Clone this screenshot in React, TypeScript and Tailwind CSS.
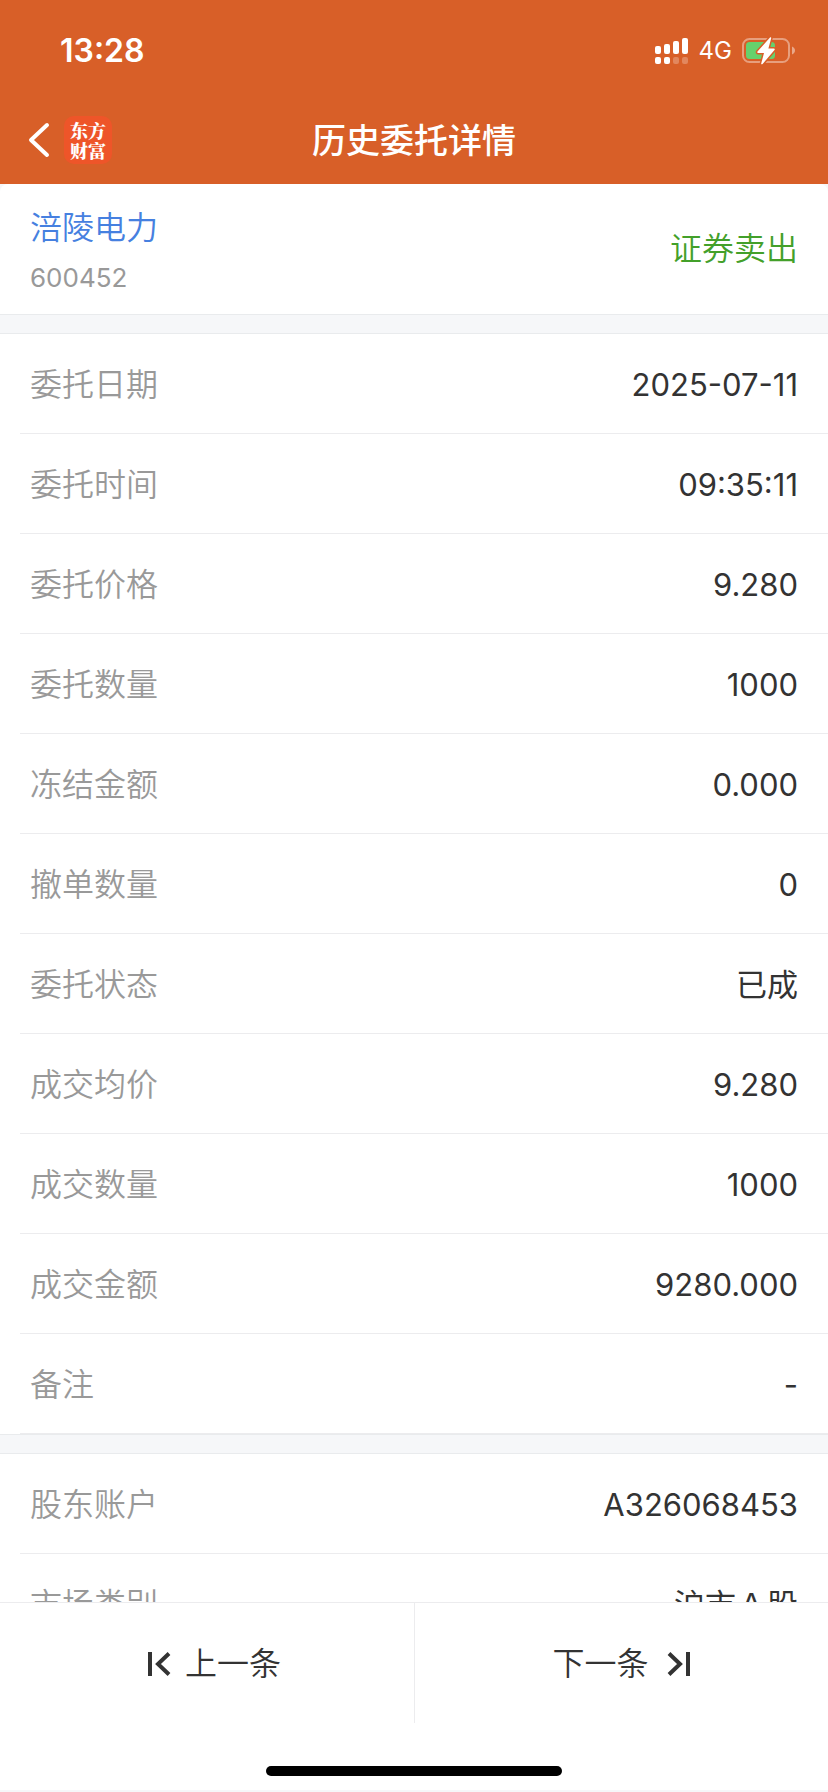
import React from 'react';

interface Field {
  label: string;
  value: string;
}

const orderFields: Field[] = [
  { label: '委托日期', value: '2025-07-11' },
  { label: '委托时间', value: '09:35:11' },
  { label: '委托价格', value: '9.280' },
  { label: '委托数量', value: '1000' },
  { label: '冻结金额', value: '0.000' },
  { label: '撤单数量', value: '0' },
  { label: '委托状态', value: '已成' },
  { label: '成交均价', value: '9.280' },
  { label: '成交数量', value: '1000' },
  { label: '成交金额', value: '9280.000' },
  { label: '备注', value: '-' }
];

const accountFields: Field[] = [
  { label: '股东账户', value: 'A326068453' },
  { label: '市场类别', value: '沪市Ａ股' }
];

const SignalIcon: React.FC = () => (
  <svg className="h-[26px] w-[34px]" viewBox="0 0 34 26" fill="white" aria-hidden="true">
    <rect x="0" y="8" width="6" height="8" rx="2" />
    <rect x="9" y="6" width="6" height="10" rx="2" />
    <rect x="18" y="3" width="6" height="13" rx="2" />
    <rect x="27" y="0" width="6" height="16" rx="2" />
    <rect x="0" y="19" width="6" height="7" rx="2" />
    <rect x="9" y="19" width="6" height="7" rx="2" />
    <rect x="18" y="19" width="6" height="7" rx="2" opacity="0.25" />
    <rect x="27" y="19" width="6" height="7" rx="2" opacity="0.25" />
  </svg>
);

const BatteryIcon: React.FC = () => (
  <svg className="h-7 w-[54px]" viewBox="0 0 54 28" aria-hidden="true">
    <rect x="1" y="2" width="46" height="23" rx="6.5" fill="none" stroke="white" strokeOpacity="0.4" strokeWidth="2" />
    <path d="M50 9.5c2 .8 3 2.300 3 4s-1 3.200-3 4z" fill="white" fillOpacity="0.45" />
    <rect x="4" y="5" width="29" height="17" rx="3.500" fill="#66d16c" />
    <path
      d="M28 .5L15.500 14.500c-.6.8-.2 1.500.7 1.500h5.800l-2.800 10.500c-.2.9.8 1.200 1.400.4L32.500 13c.6-.8.2-1.500-.7-1.500h-5.400L29.200 1.200c.2-.9-.6-1.300-1.200-.7z"
      fill="white"
      stroke="#d85f28"
      strokeWidth="3"
      paintOrder="stroke"
      strokeLinejoin="round"
    />
  </svg>
);

const FieldList: React.FC<{ fields: Field[] }> = ({ fields }) => (
  <dl className="bg-white pl-5">
    {fields.map((field) => (
      <div
        key={field.label}
        className="flex h-[100px] items-center justify-between border-b border-[#ececee] pt-[2px] pr-[30px] pl-[10px]"
      >
        <dt className="text-[#999999]">{field.label}</dt>
        <dd className="text-[31px] font-normal text-[#333333]">{field.value}</dd>
      </div>
    ))}
  </dl>
);

const Divider: React.FC = () => (
  <div className="h-5 border-y border-[#e9ebed] bg-[#f6f7f9]" />
);

const App: React.FC = () => {
  return (
    <div className="flex h-screen flex-col bg-[#f6f7f9] font-['Inter','Noto_Sans_CJK_SC',sans-serif] text-[32px] leading-10 font-[360]">
      <header className="shrink-0 bg-[#d85f28] text-white">
        <div className="flex h-24 items-center justify-between pt-[6px] pr-8 pl-[60px]">
          <time className="font-semibold">13:28</time>
          <div className="flex items-center gap-[10px]">
            <SignalIcon />
            <span className="text-2xl font-normal">4G</span>
            <BatteryIcon />
          </div>
        </div>

        <div className="grid h-[88px] grid-cols-3 items-center px-7">
          <div className="flex items-center gap-[14px]">
            <button type="button" aria-label="返回">
              <svg className="h-9 w-[22px]" viewBox="0 0 22 36" fill="none" stroke="white" strokeWidth="4" strokeLinecap="round" strokeLinejoin="round">
                <path d="M19 3L3 18l16 15" />
              </svg>
            </button>
            <div className="flex size-12 items-center justify-center rounded-[10px] bg-[#ee5529]">
              <span className="w-9 font-['Noto_Serif_CJK_SC','Noto_Sans_CJK_SC',sans-serif] text-[18px] leading-5 font-black">
                东方财富
              </span>
            </div>
          </div>
          <h1 className="pt-[2px] text-center text-[34px] font-medium whitespace-nowrap">历史委托详情</h1>
        </div>
      </header>

      <main className="min-h-0 flex-1 overflow-y-auto [scrollbar-width:none]">
        <section className="flex h-[130px] items-center justify-between rounded-t-lg bg-white px-[30px]">
          <div className="pt-2">
            <a href="#stock" className="block text-[#4680e0]">涪陵电力</a>
            <p className="mt-[10px] text-[26px] font-normal text-[#999999]">600452</p>
          </div>
          <span className="text-[#43a02a]">证券卖出</span>
        </section>

        <Divider />
        <FieldList fields={orderFields} />
        <Divider />
        <FieldList fields={accountFields} />
      </main>

      <footer className="shrink-0 border-t border-b-2 border-t-[#ececee] border-b-[#f6f7f9] bg-white">
        <nav className="grid h-[120px] grid-cols-2 text-[#333333]">
          <button type="button" className="flex items-center justify-center gap-[14px] pt-[2px] pl-[14px]">
            <svg className="h-6 w-6" viewBox="0 0 24 24" fill="none" stroke="currentColor" strokeWidth="4">
              <path d="M3 0v24M22 1.500L11 12l11 10.500" />
            </svg>
            上一条
          </button>
          <button type="button" className="flex items-center justify-center gap-[18px] border-l border-[#ececee] pt-[2px]">
            下一条
            <svg className="h-6 w-6" viewBox="0 0 24 24" fill="none" stroke="currentColor" strokeWidth="4">
              <path d="M21 0v24M2 1.500L13 12 2 22.500" />
            </svg>
          </button>
        </nav>
        <div className="flex h-[67px] items-end justify-center pb-[14px]">
          <div className="h-[10px] w-[296px] rounded-full bg-black" />
        </div>
      </footer>
    </div>
  );
};

export default App;
